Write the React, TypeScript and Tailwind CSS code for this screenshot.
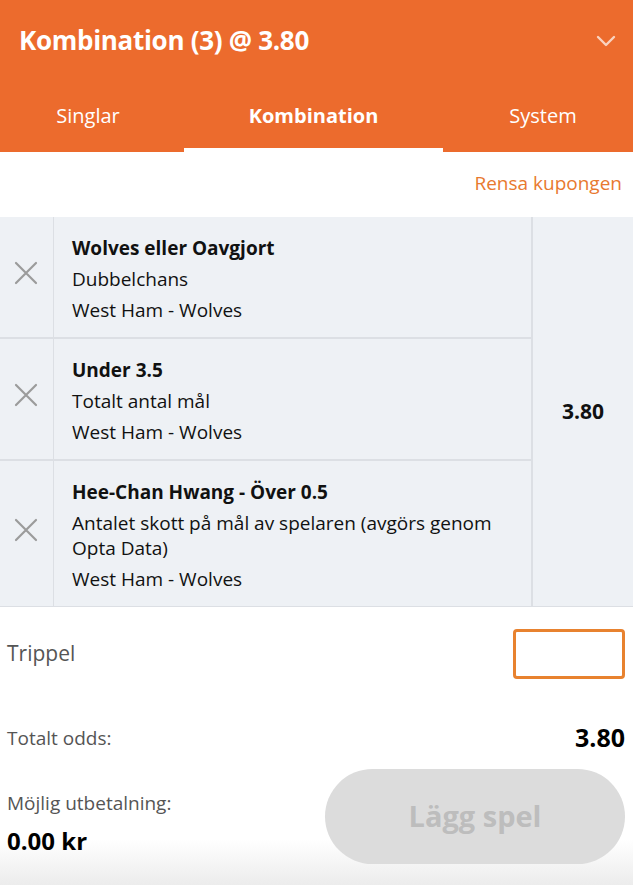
import React from 'react';

const FONT = { fontFamily: '"Open Sans", "Noto Sans", sans-serif' };

const selections = [
  { title: 'Wolves eller Oavgjort', market: 'Dubbelchans', event: 'West Ham - Wolves' },
  { title: 'Under 3.5', market: 'Totalt antal mål', event: 'West Ham - Wolves' },
  {
    title: 'Hee-Chan Hwang - Över 0.5',
    market: 'Antalet skott på mål av spelaren (avgörs genom Opta Data)',
    event: 'West Ham - Wolves'
  }
];

function CloseIcon() {
  return (
    <svg width="24" height="24" viewBox="0 0 24 24" className="text-[#9b9b9b]">
      <path d="M2 2 L22 22 M22 2 L2 22" stroke="currentColor" strokeWidth="2.2" strokeLinecap="round" />
    </svg>
  );
}

function Chevron() {
  return (
    <svg width="20" height="12" viewBox="0 0 20 12" className="text-white/70">
      <path d="M2 2 L10 10 L18 2" stroke="currentColor" strokeWidth="2.4" fill="none" strokeLinecap="round" strokeLinejoin="round" />
    </svg>
  );
}

export default function App() {
  return (
    <div className="w-[633px] h-[885px] overflow-hidden bg-white flex flex-col" style={FONT}>
      {/* Header */}
      <div className="bg-[#ec6b2d] text-white">
        <div className="h-[95px] flex items-center justify-between pl-[19px] pr-[17px] pb-[14px]">
          <h1 className="text-[26px] font-bold tracking-[-0.3px]">Kombination (3) @ 3.80</h1>
          <Chevron />
        </div>
        <div className="flex h-[57px] text-[20px]">
          <div className="w-[184px] flex items-center justify-center pb-[16px] pr-[8px]">Singlar</div>
          <div className="w-[259px] flex items-center justify-center pb-[12px] font-bold border-b-4 border-white">
            Kombination
          </div>
          <div className="flex-1 flex items-center justify-center pb-[16px] pl-[10px]">System</div>
        </div>
      </div>

      {/* Clear */}
      <div className="h-[65px] flex items-center justify-end pr-[11px] pb-[2px]">
        <span className="text-[19px] text-[#e8792f]">Rensa kupongen</span>
      </div>

      {/* Selections */}
      <div className="flex bg-[#eef1f5] border-b border-[#dcdfe4]">
        <div className="flex-1 border-r-2 border-[#dcdfe4]">
          {selections.map((s, i) => (
            <div key={i} className={`flex ${i > 0 ? 'border-t-2 border-[#dcdfe4]' : ''}`}>
              <div className="w-[54px] shrink-0 flex items-center justify-center border-r border-[#dcdfe4] pr-[2px] pb-[8px]">
                <CloseIcon />
              </div>
              <div className="flex-1 pl-[18px] pr-4 pt-[19px] pb-[14px] text-[19px] leading-[25px] text-[#111] flex flex-col gap-[6px]">
                <div className="font-bold">{s.title}</div>
                <div>{s.market}</div>
                <div>{s.event}</div>
              </div>
            </div>
          ))}
        </div>
        <div className="w-[100px] flex items-center justify-center">
          <span className="text-[21px] font-bold text-[#111]">3.80</span>
        </div>
      </div>

      {/* Stake */}
      <div className="flex items-center justify-between pl-[7px] pr-[8px] pt-[22px]">
        <span className="text-[21px] text-[#555]">Trippel</span>
        <div className="w-[112px] h-[50px] border-[3px] border-[#e8822f] rounded-[4px] bg-white" />
      </div>

      {/* Footer */}
      <div className="flex-1 bg-gradient-to-b from-white from-[78%] to-[#ececec] pl-[7px] pr-[8px]">
        <div className="flex items-center justify-between mt-[40px]">
          <span className="text-[19px] text-[#555]">Totalt odds:</span>
          <span className="text-[25px] font-bold text-black">3.80</span>
        </div>
        <div className="flex justify-between mt-[12px]">
          <div className="flex flex-col pt-[20px]">
            <span className="text-[19px] text-[#555]">Möjlig utbetalning:</span>
            <span className="text-[24px] font-bold text-black mt-[6px]">0.00 kr</span>
          </div>
          <button className="w-[300px] h-[95px] rounded-full bg-[#dcdcdc] text-[#bdbdbd] text-[29px] font-bold">
            Lägg spel
          </button>
        </div>
      </div>
    </div>
  );
}
